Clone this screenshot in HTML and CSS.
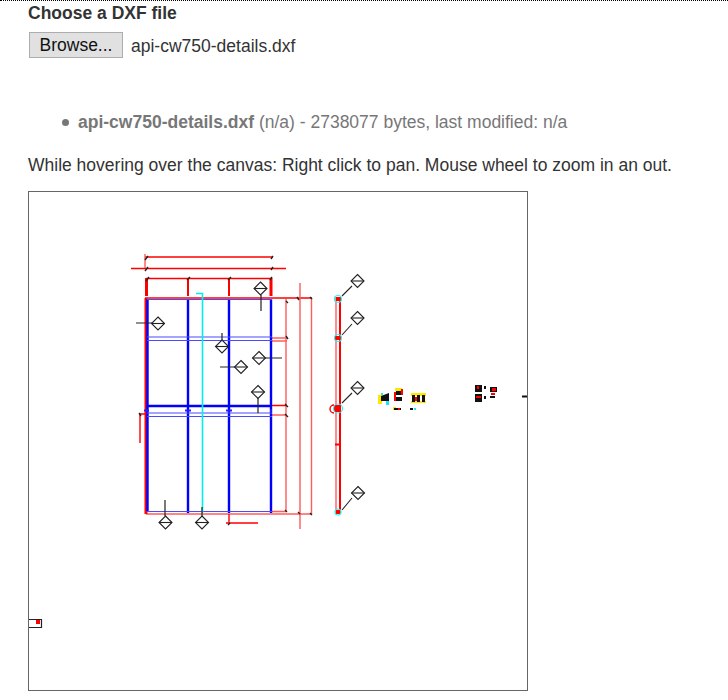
FILE: index.html
```html
<!DOCTYPE html>
<html lang="en">
<head>
    <meta charset="UTF-8">
    <meta name="viewport" content="width=device-width, initial-scale=1.0">
    <title>DXF viewer</title>
    <link rel="stylesheet" href="styles.css">
</head>
<body>
    <label class="file-label">Choose a DXF file</label>
    <div class="file-row">
        <button class="browse" type="button">Browse...</button>
        <span class="file-name">api-cw750-details.dxf</span>
    </div>
    <ul class="file-list">
        <li><strong>api-cw750-details.dxf</strong> (n/a) - 2738077 bytes, last modified: n/a</li>
    </ul>
    <p class="hint">While hovering over the canvas: Right click to pan. Mouse wheel to zoom in an out.</p>
    <div class="canvas">
        <!-- viewBox uses page coordinates -->
        <svg class="drawing" viewBox="29 192 498 498" width="498" height="498">
            <defs>
                <g id="dia">
                    <path class="sym" d="M0-6.5 6.5 0 0 6.5-6.5 0Z"/>
                    <path class="sym" d="M-6.5 0H6.5"/>
                </g>
            </defs>

            <!-- dimension lines -->
            <path class="red" d="M145 257H273"/>
            <path class="red" d="M131 268.500H286"/>
            <path class="red" d="M146 278.500H272"/>
            <path class="red" d="M145 298H312"/>
            <path class="pale" d="M145 254V268M286 299V511M300 283V529M311.500 298V514M272 415H287M272 511.500H286M272 514H312M146 514H272"/>
            <path class="pale" d="M272 338H287M272 341H287"/>
            <path class="red" d="M272 405.500H287M140 414V443M140 414H147M229 514V523M226 523H258"/>
            <path class="thick-red" d="M146.500 278V296M271 278V296M146 298V514"/>
            <path class="post-red" d="M188 278V296M229 278V296"/>

            <!-- frame -->
            <path class="blue" d="M147.500 299V511M188 299V513M229 299V513M271 299V513M147 406H272"/>
            <path class="thin-blue" d="M147 299.500H272M147 337H272M147 340.500H272M147 413H272M147 416.500H272M147 511.500H272"/>
            <path class="dot-blue" d="M144 410.500H149M185 410.500H191M226 410.500H232M270 410.500H272"/>
            <path class="cyan" d="M196 293.500H202.500V513"/>

            <!-- ticks -->
            <path class="tick" d="M145 260 148 256M145 271 148 267M146 281 149 277M187 280 190 277M228 280 231 277M271 259 273 256M271 270 273 267M270 280 272 277M297 297 299 300M310 297 312 299M286 301 288 303M286 336 288 339M285 404 288 407M285 414 288 417M285 510 287 512M298 512 300 514M310 513 312 515M139 413 141 416M228 525 230 523"/>

            <!-- side section -->
            <path class="pale" d="M336 297V514"/>
            <path class="side" d="M340 297V514"/>
            <path class="side" d="M335 444.500H341M335 408H341"/>
            <path class="red-dot" d="M336 297H340V301H336ZM335 336H340V340H335ZM334 405H341V412H334ZM336 510H339V514H336Z"/>
            <circle class="ring" cx="338" cy="299" r="3.500"/>
            <circle class="ring" cx="338" cy="338" r="3.500"/>
            <circle class="ring" cx="338" cy="408.500" r="4.500"/>
            <circle class="ring" cx="338" cy="512" r="3"/>
            <path class="red" d="M334 405A4 4 0 0 0 334 413"/>

            <!-- leaders -->
            <path class="sym" d="M342 296 352 286M342 335 352 324M342 403 352 393M342 510 352 498"/>
            <path class="stem" d="M136 323H152M261 295V311M222 333V341M220 367H235M265 358H282M258 398V413M165 500V516M202 507V516"/>

            <use href="#dia" x="357.500" y="281"/>
            <use href="#dia" x="357.500" y="318"/>
            <use href="#dia" x="357.500" y="388"/>
            <use href="#dia" x="358" y="493"/>
            <use href="#dia" x="158" y="323.500"/>
            <use href="#dia" x="260.500" y="288.500"/>
            <use href="#dia" x="222" y="346.500"/>
            <use href="#dia" x="241" y="367"/>
            <use href="#dia" x="259" y="358"/>
            <use href="#dia" x="258" y="392"/>
            <use href="#dia" x="165.500" y="522.500"/>
            <use href="#dia" x="202" y="522.500"/>

            <!-- far detail clusters -->
            <path class="fill-yellow" d="M378 395H382V404H378ZM395 388H402V391H395ZM411 393H426V396H411ZM411 401H426V403H411ZM393 407H396V410H393Z"/>
            <path class="fill-black" d="M381 396 389 393V405H386V401H381ZM396 391H401V395H396ZM395 397H402V401H395ZM412 395H415V402H412ZM417 395H420V402H417ZM422 395H425V402H422ZM394 408H401V410H394ZM410 408H413V410H410ZM475 385H482V392H475ZM475 394H482V402H475ZM484 386H486V389H484ZM484 396H486V399H484ZM490 387H497V392H490ZM490 396H495V398H490ZM522 395.500H527V397.500H522Z"/>
            <path class="fill-red" d="M394 392H396V401H394ZM401 389H403V395H401ZM477 386H479V389H477ZM476 396H481V398H476ZM492 388H496V391H492ZM491 393H495V395H491ZM398 408H400V410H398ZM415 397H417V401H415Z"/>
            <path class="fill-cyan" d="M386 401H389V405H386ZM414 408H416V410H414ZM381 393H383V395H381Z"/>
            <path class="corner" d="M29 619.500H41.500V627.500H29"/>
            <path class="fill-red" d="M36 620H40V624H36Z"/>
        </svg>
    </div>
</body>
</html>
```

FILE: styles.css
```css
body {
    font-family: 'Liberation Sans', Arial, sans-serif;
    font-size: 17.5px;
    line-height: 20px;
    margin: 0;
    padding: 0 0 0 28px;
    border-top: 1px dotted #000;
    background: white;
    color: #333;
}
.file-label {
    display: block;
    margin-top: 2px;
    font-weight: bold;
}
.file-row {
    display: flex;
    align-items: center;
    gap: 8px;
    margin: 9px 0 0 1px;
}
.browse {
    width: 94px;
    height: 26px;
    padding: 0;
    font-family: inherit;
    font-size: 17.5px;
    color: #111;
    background: #e1e1e1;
    border: 1px solid #adadad;
    border-radius: 0;
}
.file-name {
    padding-top: 1px;
}
.file-list {
    margin: 54px 0 0;
    padding: 0 0 0 50px;
    list-style: none;
    color: #777;
}
.file-list li::before {
    content: "";
    display: inline-block;
    width: 7px;
    height: 7px;
    margin: 0 9px 1px -16px;
    border-radius: 50%;
    background: #777;
    vertical-align: middle;
}
.hint {
    margin: 23px 0 0;
}
.canvas {
    width: 498px;
    height: 498px;
    margin-top: 16px;
    border: 1px solid #666;
}
.drawing {
    display: block;
}
.drawing path,
.drawing circle {
    fill: none;
}
.red { stroke: #f00; stroke-width: 1.4; }
.pale { stroke: #ff5c5c; stroke-width: 1.4; }
.thick-red { stroke: #f00; stroke-width: 3; }
.post-red { stroke: #f00; stroke-width: 2; }
.side { stroke: #f00; stroke-width: 2; }
.blue { stroke: #00f; stroke-width: 2.4; }
.thin-blue { stroke: #4a4aff; stroke-width: 1.2; }
.dot-blue { stroke: #22f; stroke-width: 2; }
.cyan { stroke: #00f0f0; stroke-width: 1.6; }
.tick { stroke: #222; stroke-width: 1.4; }
.sym { stroke: #222; stroke-width: 1.1; }
.stem { stroke: #222; stroke-width: 1.2; }
.ring { stroke: #3ee; stroke-width: 1.2; }
.corner { stroke: #222; stroke-width: 1.2; }
.drawing .red-dot { fill: #f00; }
.drawing .fill-yellow { fill: #ffe800; }
.drawing .fill-black { fill: #111; }
.drawing .fill-red { fill: #f00; }
.drawing .fill-cyan { fill: #1ee; }
```
